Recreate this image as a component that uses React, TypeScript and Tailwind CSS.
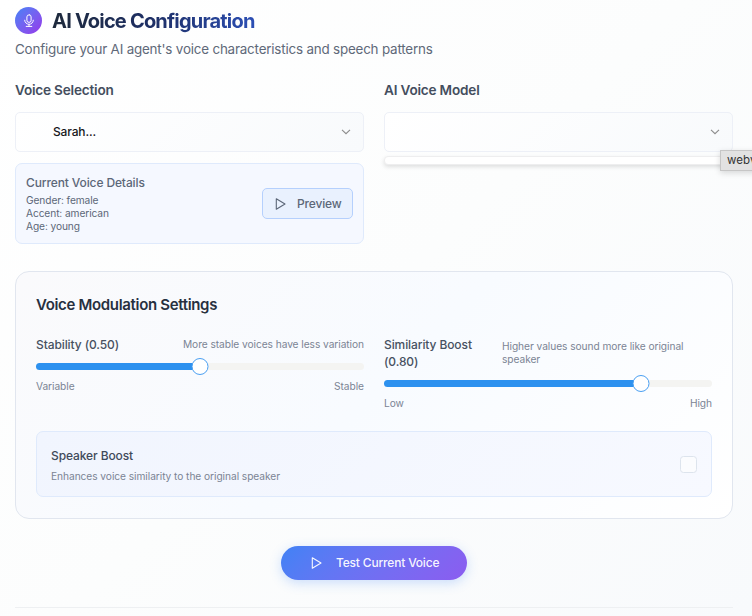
import React from "react";

const PlayIcon = ({ className }: { className: string }) => (
  <svg className={className} viewBox="0 0 12 14" fill="none" stroke="currentColor" strokeWidth="1.1" strokeLinejoin="round">
    <path d="M1.3 1.8v10.4L10 7z" />
  </svg>
);

const MicIcon = () => (
  <svg className="h-[14px] w-[12px]" viewBox="0 0 12 14" fill="none" stroke="white" strokeWidth="1" strokeLinecap="round" strokeLinejoin="round">
    <rect x="3.9" y="0.8" width="4.2" height="7.6" rx="2.1" />
    <path d="M1.7 6.2a4.3 4.1 0 0 0 8.6 0M6 10.4v2M3.2 12.4h5.6" />
  </svg>
);

function SelectBox({ value }: { value?: string }) {
  return (
    <div className="flex h-10 items-center justify-between rounded-[5px] border border-[#edf0f7] bg-linear-135 from-white to-[#f8fafc] pr-3 pl-[37px]">
      <span className="text-[12px] font-medium tracking-[-0.15px] text-[#18181b]">{value}</span>
      <svg className="h-[6px] w-[10px]" viewBox="0 0 10 6" fill="none" stroke="#8c8c8c" strokeWidth="1.1">
        <path d="M1 0.8l4 3.9 4-3.9" />
      </svg>
    </div>
  );
}

function Slider({ value }: { value: number }) {
  return (
    <div className="relative h-[7px] rounded-full bg-[#f4f4f2]">
      <div className="h-full rounded-full bg-[#2d91ef]" style={{ width: `${value * 100}%` }} />
      <div
        className="absolute top-[-5px] h-[17px] w-[17px] -translate-x-1/2 rounded-full border border-[#4a9ff2] bg-white"
        style={{ left: `${2.5 + value * 95}%` }}
      />
    </div>
  );
}

export default function App() {
  return (
    <main className="relative h-[616px] w-[752px] overflow-hidden bg-linear-135 from-white via-[#fcfdfd] to-[#f8fafc] px-[15px] pt-[7px] font-['Inter',sans-serif]">
      <header>
        <div className="flex h-[27px] items-center gap-[10px]">
          <div className="flex h-[27px] w-[27px] items-center justify-center rounded-full bg-linear-135 from-[#3b82f6] to-[#9333ea]">
            <MicIcon />
          </div>
          <h1 className="bg-linear-to-r from-[#1e293b] via-[#1e2f66] to-[#2c4fb5] bg-clip-text text-[20px] leading-[28px] font-bold tracking-[-0.8px] text-transparent">
            AI Voice Configuration
          </h1>
        </div>
        <p className="mt-[5px] text-[13.4px] leading-5 tracking-[-0.19px] text-[#5f6979]">
          Configure your AI agent&apos;s voice characteristics and speech patterns
        </p>
      </header>

      <section className="mt-[21px] grid grid-cols-[349px_349px] gap-5">
        <div>
          <h2 className="mb-[12px] text-[13.6px] leading-5 font-semibold tracking-[-0.2px] text-[#444e5e]">Voice Selection</h2>
          <SelectBox value="Sarah..." />
          <div className="mt-[11px] flex h-[81px] items-center justify-between rounded-[7px] border border-[#dfeafc] bg-[#f5f8ff] px-[10px]">
            <div className="text-[#5c6778]">
              <h3 className="text-[12px] leading-[18px] font-medium tracking-[-0.12px]">Current Voice Details</h3>
              <div className="mt-[2px] text-[10.2px] leading-[13px] tracking-[-0.1px]">
                <p>Gender: female</p>
                <p>Accent: american</p>
                <p>Age: young</p>
              </div>
            </div>
            <button className="flex h-[31px] w-[91px] items-center gap-[10px] rounded-[5px] border border-[#b5d0fd] bg-[#e9f1fe] pl-3 text-[12px] font-medium tracking-[-0.15px] text-[#5c6778]">
              <PlayIcon className="h-[14px] w-[12px]" />
              Preview
            </button>
          </div>
        </div>
        <div>
          <h2 className="mb-[12px] text-[13.6px] leading-5 font-semibold tracking-[-0.2px] text-[#444e5e]">AI Voice Model</h2>
          <SelectBox />
          <div className="mt-1 h-[9px] rounded-[4px] border border-[#eeeeef] bg-white shadow-[0_2px_4px_rgba(0,0,0,0.12)]" />
        </div>
      </section>

      <section className="mt-[27px] h-[248px] w-[718px] rounded-[14px] border border-[#e1e6ef] bg-linear-135 from-[#fafafc] via-[#f8fbff] to-white px-5 pt-[23px]">
        <h2 className="text-[15px] leading-5 font-semibold tracking-[-0.33px] text-[#27303f]">Voice Modulation Settings</h2>
        <div className="mt-[21px] grid grid-cols-[328px_328px] gap-5">
          <div>
            <div className="flex h-[17px] items-center justify-between">
              <span className="text-[12px] leading-[17px] font-medium tracking-[-0.1px] text-[#475161]">Stability (0.50)</span>
              <span className="text-[10.2px] leading-[13px] tracking-[-0.06px] text-[#7b8494]">More stable voices have less variation</span>
            </div>
            <div className="mt-[10px]"><Slider value={0.5} /></div>
            <div className="mt-[10px] flex justify-between text-[10.2px] leading-[13px] tracking-[-0.06px] text-[#7b8494]">
              <span>Variable</span><span>Stable</span>
            </div>
          </div>
          <div>
            <div className="flex h-[34px] items-center justify-between">
              <span className="w-[100px] text-[12px] leading-[17px] font-medium tracking-[-0.1px] text-[#475161]">Similarity Boost (0.80)</span>
              <span className="w-[210px] text-[10.2px] leading-[13px] tracking-[-0.06px] text-[#7b8494]">Higher values sound more like original speaker</span>
            </div>
            <div className="mt-[10px]"><Slider value={0.8} /></div>
            <div className="mt-[10px] flex justify-between text-[10.2px] leading-[13px] tracking-[-0.06px] text-[#7b8494]">
              <span>Low</span><span>High</span>
            </div>
          </div>
        </div>
        <div className="mt-[21px] flex h-[66px] items-center justify-between rounded-[7px] border border-[#dfeafc] bg-linear-135 from-[#f1f5fe] to-[#f7f9ff] px-[14px]">
          <div className="pt-[2px]">
            <h3 className="text-[12px] leading-[17px] font-medium tracking-[-0.1px] text-[#3f4a5a]">Speaker Boost</h3>
            <p className="mt-[6px] text-[10.2px] leading-[13px] tracking-[-0.06px] text-[#7b8494]">Enhances voice similarity to the original speaker</p>
          </div>
          <div className="h-[17px] w-[17px] rounded-[3.5px] border border-[#dde4ed] bg-[#fbfcfe]" />
        </div>
      </section>

      <button className="mt-[27px] ml-[266px] flex h-[34px] w-[186px] items-center gap-[13px] rounded-full bg-linear-135 from-[#3f82f5] to-[#8b5cf0] pl-[30px] text-[12px] font-medium tracking-[-0.18px] whitespace-nowrap text-white/95 shadow-[0_3px_12px_rgba(59,130,246,0.25)]">
        <PlayIcon className="h-[14px] w-[12px]" />
        Test Current Voice
      </button>
      <div className="mt-[27px] w-[718px] border-t border-[#eef0f2]" />

      <div className="absolute top-[150px] left-[720px] h-[21px] w-[60px] border border-[#c6c6c6] bg-[#e2e2e2] pl-[6px] text-[11.5px] leading-[19px] tracking-[0.1px] text-[#333] shadow-[0_2px_6px_rgba(0,0,0,0.15)]">
        webv
      </div>
    </main>
  );
}
